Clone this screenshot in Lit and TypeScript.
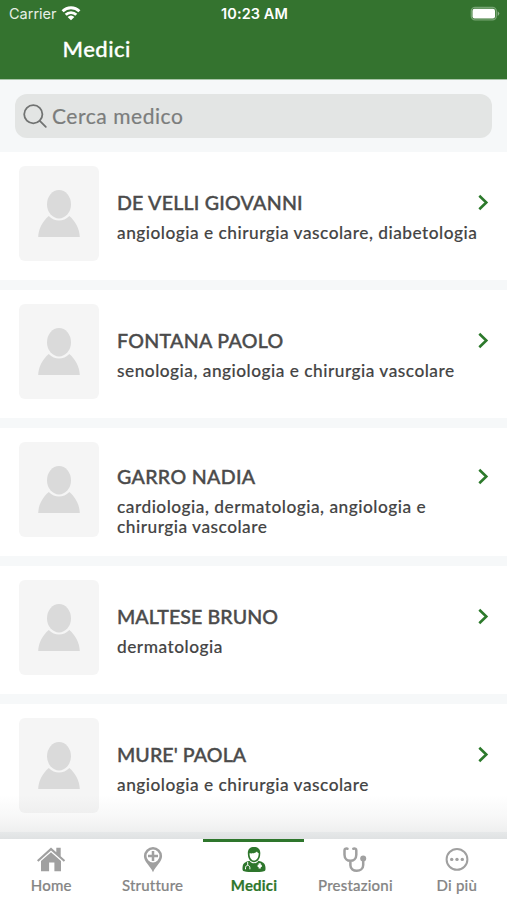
import { LitElement, html, css, svg, TemplateResult } from "lit";
import { customElement, property } from "lit/decorators.js";
import { classMap } from "lit/directives/class-map.js";
import { styleMap } from "lit/directives/style-map.js";

interface Doctor {
  name: string;
  tracking: number;
  fields: string[];
}

const doctors: Doctor[] = [
  { name: "DE VELLI GIOVANNI", tracking: 0.22, fields: ["angiologia e chirurgia vascolare, diabetologia"] },
  { name: "FONTANA PAOLO", tracking: 0.3, fields: ["senologia, angiologia e chirurgia vascolare"] },
  { name: "GARRO NADIA", tracking: 0.33, fields: ["cardiologia, dermatologia, angiologia e", "chirurgia vascolare"] },
  { name: "MALTESE BRUNO", tracking: 0.1, fields: ["dermatologia"] },
  { name: "MURE' PAOLA", tracking: 0.08, fields: ["angiologia e chirurgia vascolare"] },
];

const icons: Record<string, TemplateResult> = {
  home: svg`<path fill="currentColor" d="M1 15.2 15 2.6l5.3 4.7V2.8h4.4v8.5l4.5 3.9-1.4 1.5L15 5.4 2.4 16.7zM5 16.1 15 7.2l10 8.9v10.2h-6.6v-8.8h-5.3v8.8H5z"/>`,
  place: svg`<path fill="currentColor" fill-rule="evenodd" d="M15 2a9.1 9.1 0 0 0-9.1 9.1c0 5.8 6.2 9.700 9.100 16.100 2.900-6.400 9.100-10.300 9.100-16.100A9.100 9.100 0 0 0 15 2zm0 2.500a6.500 6.500 0 1 1 0 13 6.500 6.500 0 0 1 0-13z"/><path stroke="currentColor" stroke-width="2.500" d="M15 6v10M10 11h10"/>`,
  doctor: svg`<path fill="currentColor" d="M8.900 9.500C8.300 4.400 10.900 2 15 2s6.900 2.400 6.200 7.500c0 4.400-2.900 7.700-6.200 7.700s-6.100-3.300-6.100-7.700z"/><path fill="#fff" d="M10.500 8.300c2.400.5 6-.2 7.500-1.800.4 1.200 1.200 1.600 1.700 1.800 0 4.300-2 7.300-4.700 7.300s-4.500-3-4.500-7.300z"/><path fill="currentColor" d="M10.500 15.700c1.200 1.800 2.900 2.600 4.500 2.600s3.300-.8 4.500-2.600c4 1.100 6.500 2.200 6.900 6 .3 3.300.1 4.100-1.500 4.500-5 1.200-14.800 1.200-19.800 0-1.600-.4-1.800-1.200-1.500-4.500.4-3.800 2.900-4.900 6.900-6z"/><path fill="none" stroke="#fff" stroke-width="1" d="M8.700 17v3m-2.200 4.300v-1.500c0-3.200 4.400-3.200 4.400 0v1.500"/><path stroke="#fff" stroke-width="2.200" d="M20.700 18.200v5.400M18.600 20.900h4.200"/>`,
  stethoscope: svg`<g fill="none" stroke="currentColor" stroke-width="2.500" stroke-linecap="round"><path d="M7.500 3.700C5.500 3.300 4.500 3.800 4.500 5.600v4.100c0 8.200 11.800 8.200 11.800 0V5.600c0-1.800-1-2.300-3-1.900M10.400 16v4.300c0 7.400 12.800 7.400 12.800-.3v-4"/></g><circle cx="23.200" cy="13.500" r="3" fill="currentColor"/>`,
  more: svg`<circle cx="15" cy="14.400" r="10.400" fill="none" stroke="currentColor" stroke-width="2"/><g fill="currentColor"><circle cx="9.700" cy="14.400" r="1.700"/><circle cx="15" cy="14.400" r="1.700"/><circle cx="20.300" cy="14.400" r="1.700"/></g>`,
};

const tabs = [
  { label: "Home", icon: "home" },
  { label: "Strutture", icon: "place" },
  { label: "Medici", icon: "doctor" },
  { label: "Prestazioni", icon: "stethoscope" },
  { label: "Di più", icon: "more" },
];

@customElement("doctor-card")
export class DoctorCard extends LitElement {
  @property({ attribute: false }) doctor!: Doctor;

  static styles = css`
    :host { display: flex; box-sizing: border-box; height: 128px; padding: 14px 17px 0 19px; background: #fff; flex: none; }
    .avatar { width: 80px; height: 95px; border-radius: 6px; background: #f5f5f5; flex: none; }
    .avatar svg { display: block; }
    .text { margin: 24px 0 0 18px; flex: 1; white-space: nowrap; }
    .text.tall { margin-top: 22px; }
    .head { display: flex; justify-content: space-between; align-items: center; height: 26px; }
    .name { font: 500 19.6px/26px "Lato", sans-serif; color: #4b4b4b; -webkit-text-stroke: 0.4px #4b4b4b; }
    .fields { margin-top: 7px; font: 500 17.3px/19.5px "Lato", sans-serif; letter-spacing: 0.5px; color: #444; -webkit-text-stroke: 0.15px #444; }
    .field { width: max-content; }
  `;

  render() {
    const d = this.doctor;
    return html`
      <div class="avatar">
        <svg width="80" height="95" viewBox="0 0 80 95" fill="#dadada">
          <ellipse cx="40" cy="38.200" rx="12" ry="14.200" />
          <path d="M19.200 71c.3-8 4.200-15.500 10.600-20.900 5.800 6 14.700 6 20.500 0C56.700 55.500 60.500 63 60.800 71z" />
        </svg>
      </div>
      <div class=${classMap({ text: true, tall: d.fields.length > 1 })}>
        <div class="head">
          <span class="name" style=${styleMap({ letterSpacing: `${d.tracking}px` })}>${d.name}</span>
          <svg width="14" height="18" viewBox="0 0 14 18" fill="none" stroke="#2c792b" stroke-width="2.600">
            <path d="m3.300 1.800 7 6.700-7 6.700" />
          </svg>
        </div>
        <div class="fields">${d.fields.map((f) => html`<div class="field">${f}</div>`)}</div>
      </div>
    `;
  }
}

@customElement("app-root")
export class AppRoot extends LitElement {
  static styles = css`
    :host { display: flex; flex-direction: column; height: 900px; width: 507px; overflow: hidden; position: relative; background: #f6f8f9; font-family: "Lato", sans-serif; }
    .header { height: 80px; background: #34732f; color: #fff; flex: none; border-bottom: 1px solid #a9c5a8; box-sizing: border-box; }
    .status { display: grid; grid-template-columns: 1fr auto 1fr; align-items: center; height: 27px; padding: 0 7px 0 9px; font: 500 14.5px/27px "Inter", sans-serif; }
    .carrier { display: flex; align-items: center; gap: 5px; font-weight: 400; color: #e7efe6; }
    .carrier svg { margin: -2px 0 0 -1px; }
    .time { font-weight: 600; letter-spacing: 0.1px; }
    .battery { justify-self: end; }
    .title { margin: 8px 0 0 62.500px; font: 500 22px/28px "Lato", sans-serif; letter-spacing: 0.5px; -webkit-text-stroke: 0.3px #fff; }
    .search { display: flex; align-items: center; height: 44px; margin: 14px 15px 14px; padding-left: 8px; gap: 4px; border-radius: 12px; background: #e3e5e4; color: #7b7d7c; font-size: 21px; letter-spacing: 0.55px; flex: none; }
    .hint { margin-top: -2px; -webkit-text-stroke: 0.2px; }
    .list { display: flex; flex-direction: column; gap: 10px; flex: 1; min-height: 0; overflow: hidden; }
    .shade { position: absolute; left: 0; right: 0; bottom: 61px; height: 44px; background: linear-gradient(rgba(60,65,65,0), rgba(60,65,65,.04) 50%, rgba(60,65,65,.08) 80%, rgba(60,65,65,.12)); }
    .tabs { display: grid; grid-template-columns: repeat(5, 1fr); height: 61px; background: #fff; flex: none; }
    .tab { display: flex; flex-direction: column; align-items: center; box-sizing: border-box; border-top: 3px solid transparent; padding: 3px 0 0 1px; color: #a0a0a0; }
    .tab svg { display: block; }
    .label { font: 500 15px/20px "Lato", sans-serif; letter-spacing: 0.2px; color: #858585; -webkit-text-stroke: 0.2px; }
    .tab.active { border-color: #2e762c; color: #2e762c; }
    .active .label { color: #2e762c; font-weight: 700; }
  `;

  render() {
    return html`
      <div class="header">
        <div class="status">
          <span class="carrier">Carrier
            <svg width="20" height="16" viewBox="0 0 20 16" fill="none" stroke="#fff" stroke-width="2.900">
              <path d="M1.600 6.200a12 12 0 0 1 16.800 0M4.700 9.800a7.600 7.600 0 0 1 10.600 0" />
              <path fill="#fff" stroke="none" d="m6.600 12 3.400 3.200 3.400-3.200a5 5 0 0 0-6.800 0z" />
            </svg>
          </span>
          <span class="time">10:23 AM</span>
          <svg class="battery" width="30" height="16" viewBox="0 0 30 16">
            <rect x="1.300" y="1.300" width="25" height="12.600" rx="3.800" fill="none" stroke="#76a573" stroke-width="1.300" />
            <rect x="2.500" y="2.800" width="22.500" height="9.600" rx="2" fill="#fff" />
            <path fill="#8fb38d" d="M27.700 5.200q3.200 2.300 0 4.700z" />
          </svg>
        </div>
        <div class="title">Medici</div>
      </div>
      <div class="search">
        <svg width="25" height="25" viewBox="0 0 25 25" fill="none" stroke="#717372" stroke-width="1.800" stroke-linecap="round">
          <circle cx="10.300" cy="10.300" r="9.100" /><path d="m16.800 16.800 6 6" />
        </svg>
        <span class="hint">Cerca medico</span>
      </div>
      <div class="list">${doctors.map((d) => html`<doctor-card .doctor=${d}></doctor-card>`)}</div>
      <div class="shade"></div>
      <div class="tabs">
        ${tabs.map((t) => html`
          <div class=${classMap({ tab: true, active: t.label === "Medici" })}>
            <svg width="30" height="30" viewBox="0 0 30 30" fill="none">${icons[t.icon]}</svg>
            <span class="label">${t.label}</span>
          </div>`)}
      </div>
    `;
  }
}
